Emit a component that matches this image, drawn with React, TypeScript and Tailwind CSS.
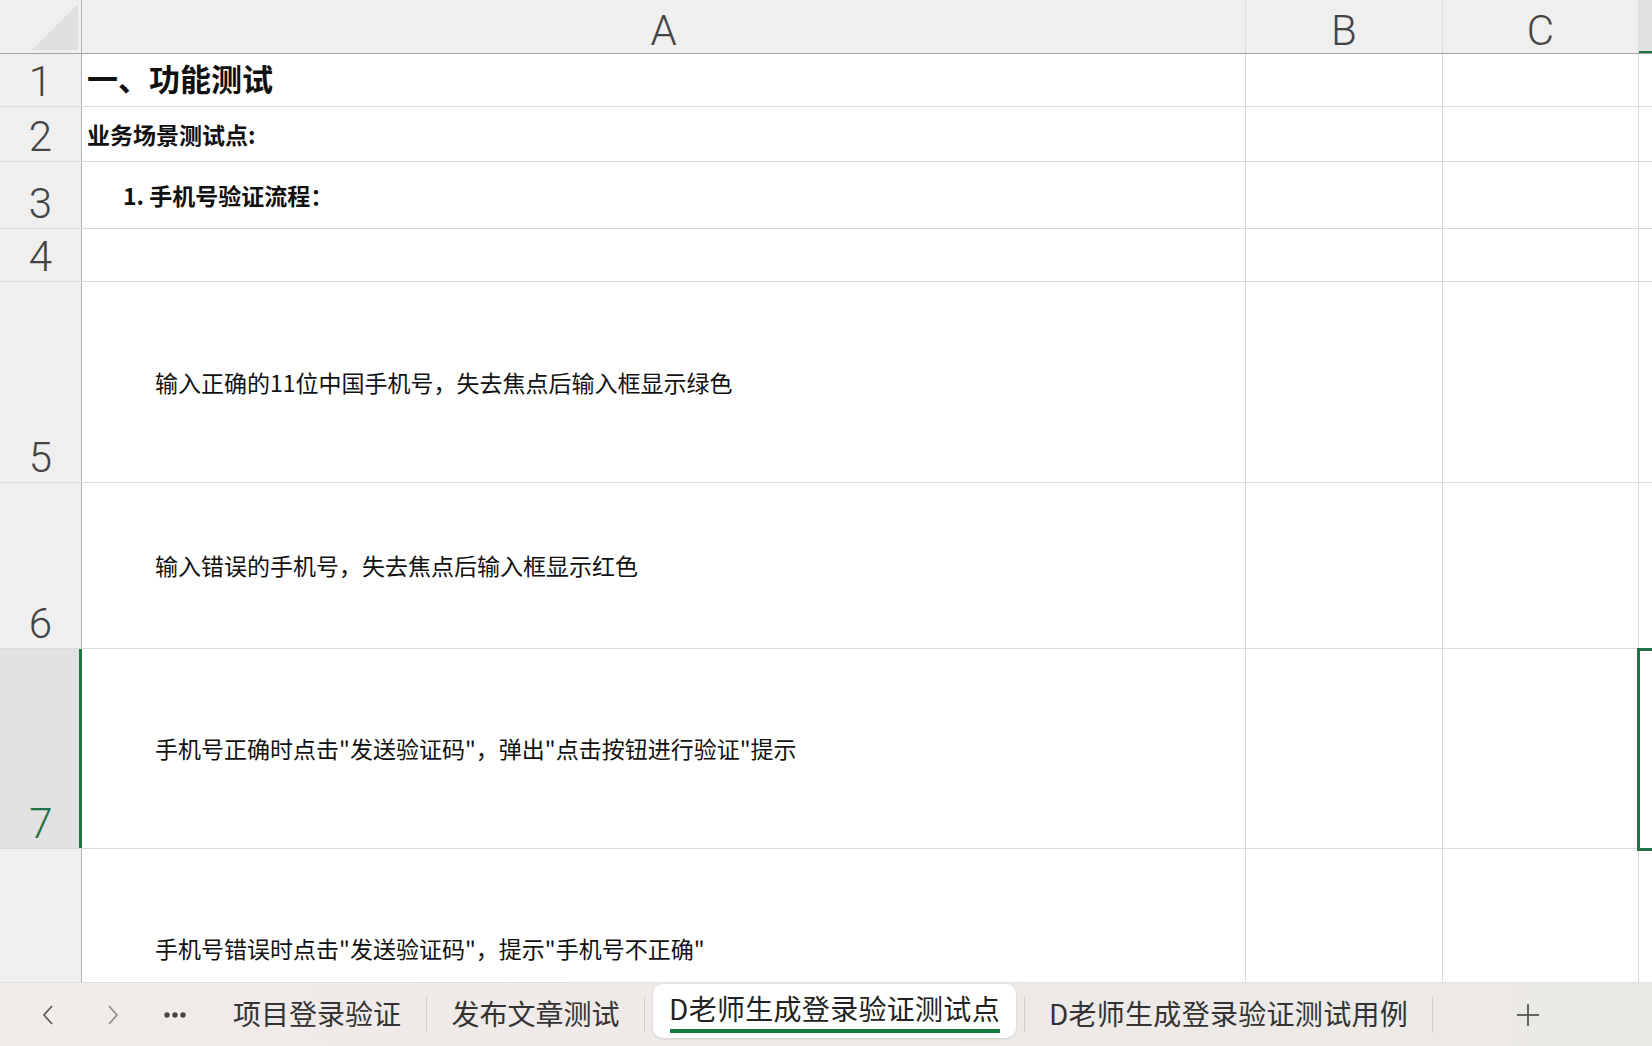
import React from "react";

const CJK = '"Noto Sans CJK SC", "Noto Sans", sans-serif';
const NUM = 'Roboto, "Noto Sans", sans-serif';

type Row = { n: number; h: number; pl: number; pb?: number; content?: React.ReactNode; active?: boolean };

const rows: Row[] = [
  { n: 1, h: 53, pl: 5, pb: 5, content: <span className="text-[31px] font-bold leading-none">一、功能测试</span> },
  { n: 2, h: 55, pl: 5, content: <span className="text-[23px] font-bold leading-none">业务场景测试点:</span> },
  { n: 3, h: 67, pl: 41, content: <span className="text-[23px] font-semibold leading-none">1. 手机号验证流程：</span> },
  { n: 4, h: 53, pl: 5 },
  { n: 5, h: 201, pl: 73, content: <span className="text-[23px] leading-none">输入正确的11位中国手机号，失去焦点后输入框显示绿色</span> },
  { n: 6, h: 166, pl: 73, content: <span className="text-[23px] leading-none">输入错误的手机号，失去焦点后输入框显示红色</span> },
  { n: 7, h: 200, pl: 73, active: true, content: <span className="text-[23px] leading-none">手机号正确时点击"发送验证码"，弹出"点击按钮进行验证"提示</span> },
  { n: 8, h: 200, pl: 73, content: <span className="text-[23px] leading-none">手机号错误时点击"发送验证码"，提示"手机号不正确"</span> },
];

function Sep() {
  return <div className="w-px h-[36px] bg-[#cfcccb] shrink-0" />;
}

export default function App() {
  return (
    <div className="w-[1652px] h-[1046px] flex flex-col overflow-hidden bg-white" style={{ fontFamily: CJK }}>
      {/* grid */}
      <div className="relative h-[982px] overflow-hidden shrink-0">
        {/* header row */}
        <div className="flex h-[54px] bg-[#efefef] border-b border-[#a3a3a3]">
          <div className="w-[82px] shrink-0 border-r border-[#b4b4b4] relative">
            <svg width="82" height="53" className="absolute left-0 top-0">
              <polygon points="78,4 78,50 32,50" fill="#dfdfdf" />
            </svg>
          </div>
          {[
            { l: "A", w: "w-[1164px]" },
            { l: "B", w: "w-[197px]" },
            { l: "C", w: "w-[196px]" },
          ].map((c) => (
            <div
              key={c.l}
              className={`${c.w} shrink-0 border-r border-[#dcdcdc] flex items-end justify-center pb-[1px] text-[42px] font-light leading-none text-[#444]`}
              style={{ fontFamily: NUM }}
            >
              {c.l}
            </div>
          ))}
          <div className="flex-1 bg-[#e1e1e1] border-b-2 border-[#217346]" />
        </div>

        {rows.map((r) => (
          <div key={r.n} className="flex border-b border-[#dadada]" style={{ height: r.h }}>
            <div
              className={`w-[82px] shrink-0 flex items-end justify-center pb-[3px] text-[42px] font-light leading-none ${
                r.active
                  ? "bg-[#e1e1e1] border-r-[3px] border-[#217346] text-[#217346] pl-[3px]"
                  : "bg-[#efefef] border-r border-[#b4b4b4] text-[#444]"
              }`}
              style={{ fontFamily: NUM }}
            >
              {r.n}
            </div>
            <div
              className="w-[1164px] shrink-0 border-r border-[#dadada] flex items-center text-[#111]"
              style={{ paddingLeft: r.pl, paddingBottom: r.pb ?? 0 }}
            >
              {r.content}
            </div>
            <div className="w-[197px] shrink-0 border-r border-[#dadada]" />
            <div className="w-[196px] shrink-0 border-r border-[#dadada]" />
            <div className="flex-1" />
          </div>
        ))}

        {/* selection box around D7 */}
        <div className="absolute left-[1637px] top-[648px] w-[40px] h-[203px] border-[3px] border-[#217346]" />
      </div>

      {/* sheet tabs bar */}
      <div className="h-[64px] shrink-0 flex items-center border-t border-[#e2dfde] bg-gradient-to-r from-[#f1ebea] via-[#eeeae8] to-[#ebe9e6] text-[#333]">
        <svg width="12" height="20" viewBox="0 0 12 20" className="ml-[42px] shrink-0">
          <polyline points="10,1 2,10 10,19" fill="none" stroke="#555" strokeWidth="1.6" />
        </svg>
        <svg width="12" height="20" viewBox="0 0 12 20" className="ml-[53px] shrink-0">
          <polyline points="2,1 10,10 2,19" fill="none" stroke="#8a8a8a" strokeWidth="1.6" />
        </svg>
        <svg width="22" height="8" viewBox="0 0 22 8" className="ml-[45px] shrink-0">
          <circle cx="3" cy="4" r="2.7" fill="#444" />
          <circle cx="11" cy="4" r="2.7" fill="#444" />
          <circle cx="19" cy="4" r="2.7" fill="#444" />
        </svg>
        <div className="ml-[22px] w-[218px] shrink-0 flex justify-center text-[28px] leading-none mb-[3px]">项目登录验证</div>
        <Sep />
        <div className="w-[217px] shrink-0 flex justify-center text-[28px] leading-none mb-[3px]">发布文章测试</div>
        <Sep />
        <div className="ml-[8px] self-start mt-[1px] w-[363px] h-[54px] shrink-0 bg-white rounded-[10px] shadow-[0_1px_3px_rgba(0,0,0,0.12)] flex flex-col items-center pt-[10px]">
          <span className="text-[28px] leading-none tracking-[0.3px] text-[#222]">D老师生成登录验证测试点</span>
          <div className="mt-[7px] w-[330px] h-[4px] bg-[#107c41]" />
        </div>
        <div className="w-[8px] shrink-0" />
        <Sep />
        <div className="w-[407px] shrink-0 flex justify-center text-[28px] leading-none tracking-[0.3px] mb-[3px]">D老师生成登录验证测试用例</div>
        <Sep />
        <svg width="22" height="22" viewBox="0 0 22 22" className="ml-[84px] shrink-0">
          <line x1="11" y1="0" x2="11" y2="22" stroke="#555" strokeWidth="1.8" />
          <line x1="0" y1="11" x2="22" y2="11" stroke="#555" strokeWidth="1.8" />
        </svg>
      </div>
    </div>
  );
}
